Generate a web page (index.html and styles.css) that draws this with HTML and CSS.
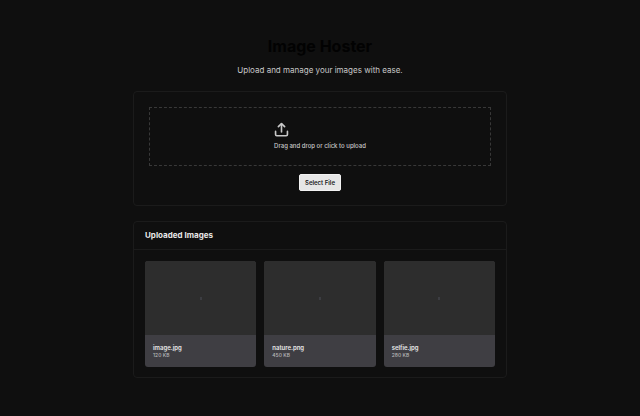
FILE: index.html
```html
<!DOCTYPE html>
<html lang="en">
<head>
<meta charset="utf-8">
<title>Image Hoster</title>
<link rel="stylesheet" href="styles.css">
</head>
<body>
<main class="page">
  <header class="intro">
    <h1 class="title">Image Hoster</h1>
    <p class="subtitle">Upload and manage your images with ease.</p>
  </header>
  <section class="card upload">
    <div class="dropzone">
      <div class="prompt">
        <svg class="icon" viewBox="0 0 24 24" fill="none" stroke="currentColor" stroke-width="2.6" stroke-linecap="round" stroke-linejoin="round" aria-hidden="true">
          <path d="M2.500 15v5a2 2 0 0 0 2 2h15a2 2 0 0 0 2-2v-5"/>
          <path d="M7 7.500 12 2.500l5 5"/>
          <path d="M12 3v13"/>
        </svg>
        <p class="hint">Drag and drop or click to upload</p>
      </div>
    </div>
    <button class="select" type="button">Select File</button>
  </section>
  <section class="card">
    <h2 class="heading">Uploaded Images</h2>
    <ul class="gallery">
      <li class="tile">
        <div class="thumb"><span class="dot"></span></div>
        <div class="meta"><p class="name">image.jpg</p><p class="size">120 KB</p></div>
      </li>
      <li class="tile">
        <div class="thumb"><span class="dot"></span></div>
        <div class="meta"><p class="name">nature.png</p><p class="size">450 KB</p></div>
      </li>
      <li class="tile">
        <div class="thumb"><span class="dot"></span></div>
        <div class="meta"><p class="name">selfie.jpg</p><p class="size">280 KB</p></div>
      </li>
    </ul>
  </section>
</main>
</body>
</html>
```
FILE: styles.css
```css
* {
  box-sizing: border-box;
  margin: 0;
  padding: 0;
}

body {
  background: #0f0f0f;
  color: #e8e8e8;
  font-family: Inter, "Liberation Sans", sans-serif;
}

.page {
  display: flex;
  flex-direction: column;
  gap: 15px;
  max-width: 374px;
  margin: 0 auto;
  padding: 36px 0;
}

.intro {
  text-align: center;
}

.title {
  color: #020202;
  font-size: 16px;
  line-height: 20px;
  font-weight: 700;
}

.subtitle {
  margin-top: 8px;
  color: #c8c8c8;
  font-size: 8px;
  line-height: 12px;
}

.card {
  border: 1px solid #1b1b1b;
  border-radius: 4px;
}

.upload {
  display: flex;
  flex-direction: column;
  align-items: center;
  gap: 8px;
  padding: 15px 15px 14px;
}

.dropzone {
  display: flex;
  justify-content: center;
  width: 100%;
  padding: 14px;
  border: 1px dashed #383838;
}

.prompt {
  color: #c8c8c8;
}

.icon {
  display: block;
  width: 15px;
  height: 15px;
}

.hint {
  margin-top: 4px;
  font-size: 6px;
  line-height: 10px;
  font-weight: 500;
}

.select {
  height: 17px;
  padding: 0 5px;
  border: 1px solid #f2f2f2;
  border-radius: 2px;
  background: #e6e6e6;
  color: #1a1a1a;
  font-family: inherit;
  font-size: 6px;
  font-weight: 600;
}

.heading {
  padding: 8px 11px;
  border-bottom: 1px solid #1b1b1b;
  font-size: 8px;
  line-height: 11px;
  font-weight: 700;
}

.gallery {
  display: grid;
  grid-template-columns: repeat(3, 1fr);
  gap: 8px;
  padding: 11px 11px 10px;
  list-style: none;
}

.tile {
  overflow: hidden;
  border-radius: 3px;
  background: #3f3e43;
}

.thumb {
  display: flex;
  align-items: center;
  justify-content: center;
  height: 74px;
  background: #2d2d2d;
}

.dot {
  width: 2px;
  height: 3px;
  background: #3c3d42;
}

.meta {
  padding: 8px;
}

.name {
  color: #e8e8e8;
  font-size: 6px;
  line-height: 9px;
  font-weight: 600;
}

.size {
  color: #b8b8ba;
  font-size: 5px;
  line-height: 7px;
  font-weight: 500;
}
```
